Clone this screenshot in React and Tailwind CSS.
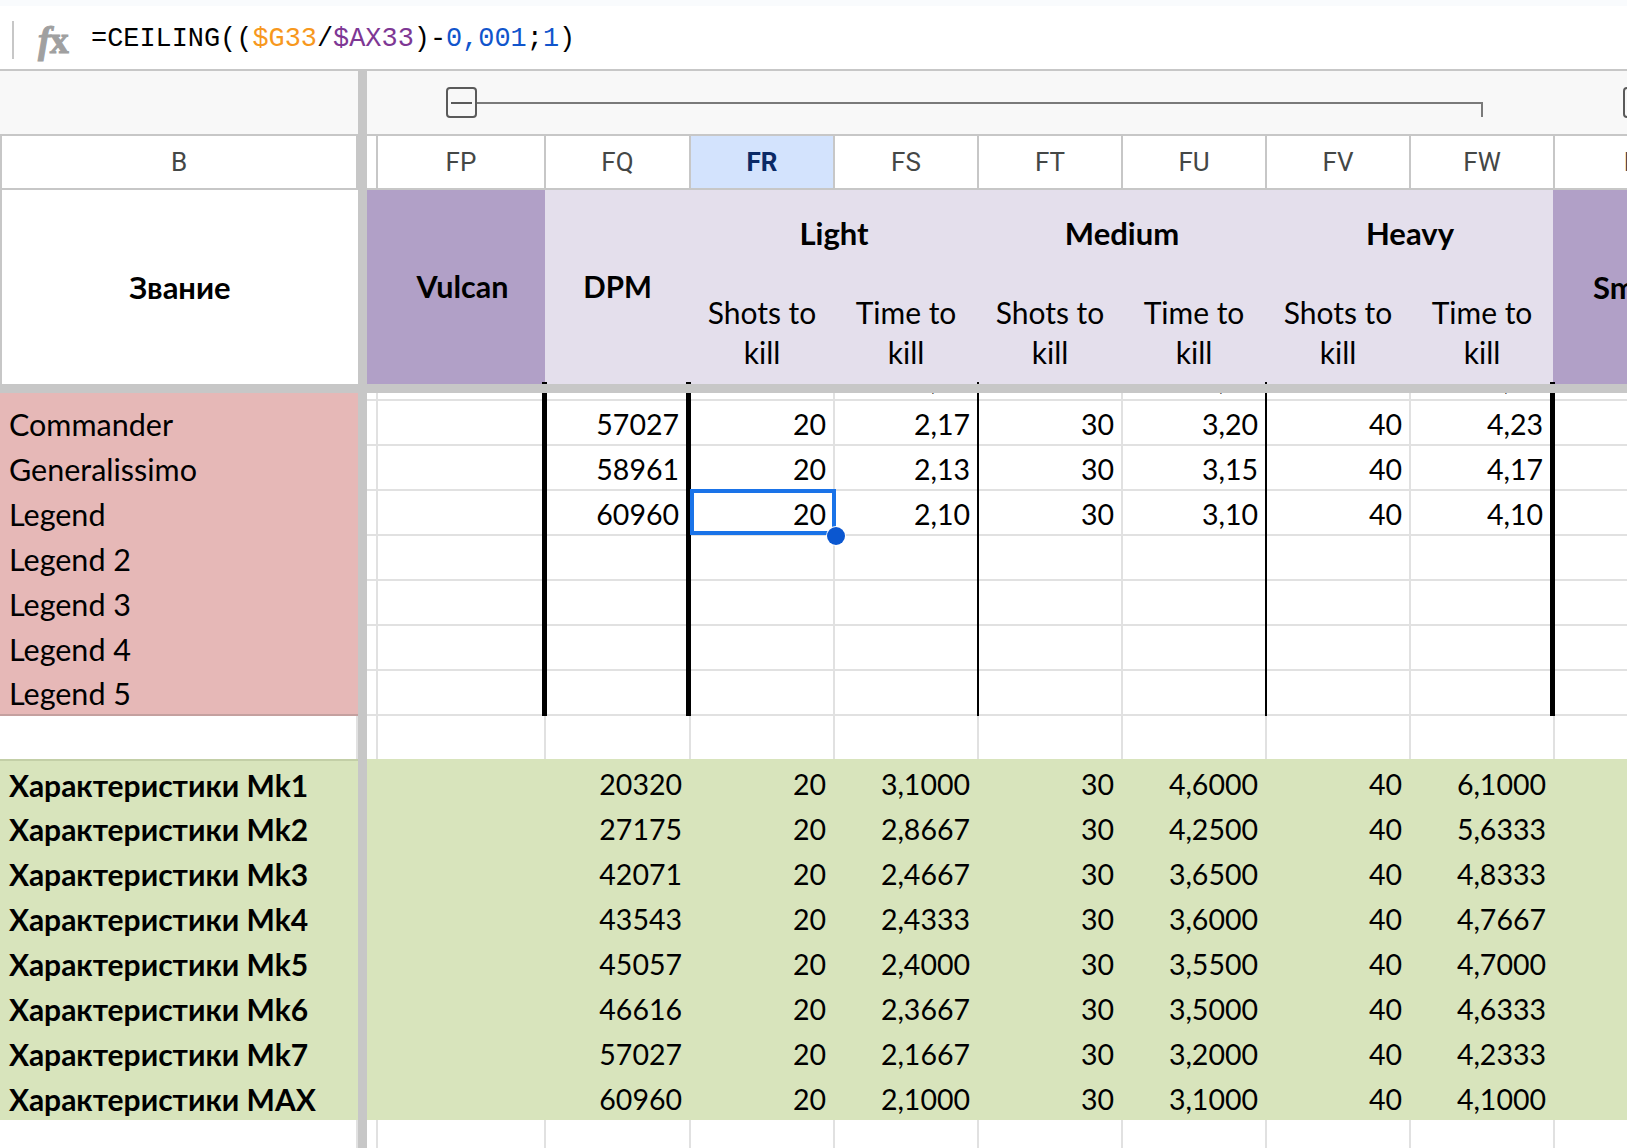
import React from 'react'

const sheetFont = "[font-family:Lato,'Noto_Sans',sans-serif]"

const columns = [
  { id: 'FQ', width: 'w-[145px]', line: 'thick' },
  { id: 'FR', width: 'w-[144px]' },
  { id: 'FS', width: 'w-[144px]', line: 'thin' },
  { id: 'FT', width: 'w-[144px]' },
  { id: 'FU', width: 'w-[144px]', line: 'thin' },
  { id: 'FV', width: 'w-[144px]' },
  { id: 'FW', width: 'w-[144px]', line: 'thick' },
]

const rankRows = [
  ['Commander', '57027', '20', '2,17', '30', '3,20', '40', '4,23'],
  ['Generalissimo', '58961', '20', '2,13', '30', '3,15', '40', '4,17'],
  ['Legend', '60960', '20', '2,10', '30', '3,10', '40', '4,10'],
  ['Legend 2'],
  ['Legend 3'],
  ['Legend 4'],
  ['Legend 5'],
]

const statRows = [
  ['Характеристики Mk1', '20320', '20', '3,1000', '30', '4,6000', '40', '6,1000'],
  ['Характеристики Mk2', '27175', '20', '2,8667', '30', '4,2500', '40', '5,6333'],
  ['Характеристики Mk3', '42071', '20', '2,4667', '30', '3,6500', '40', '4,8333'],
  ['Характеристики Mk4', '43543', '20', '2,4333', '30', '3,6000', '40', '4,7667'],
  ['Характеристики Mk5', '45057', '20', '2,4000', '30', '3,5500', '40', '4,7000'],
  ['Характеристики Mk6', '46616', '20', '2,3667', '30', '3,5000', '40', '4,6333'],
  ['Характеристики Mk7', '57027', '20', '2,1667', '30', '3,2000', '40', '4,2333'],
  ['Характеристики MAX', '60960', '20', '2,1000', '30', '3,1000', '40', '4,1000'],
]

const FreezeBar = () => <div className="w-[9px] shrink-0 self-stretch bg-[#c7c7c7]" />

const BlackLine = ({ kind }) =>
  kind === 'thick' ? (
    <span className="absolute -right-[2px] -top-[1px] -bottom-[2px] z-10 w-[5px] bg-black" />
  ) : (
    <span className="absolute -right-[2px] -top-[1px] -bottom-[2px] z-10 w-[2px] bg-black" />
  )

const HeaderTick = ({ kind }) =>
  kind === 'thick' ? (
    <span className="absolute -right-[1px] bottom-0 z-10 h-[2px] w-[5px] bg-black" />
  ) : (
    <span className="absolute -right-[1px] bottom-0 z-10 h-[2px] w-[2px] bg-black" />
  )

const RankRow = ({ row, last, selected }) => (
  <div className={`flex h-[45px] ${sheetFont} text-[28.5px] text-black`}>
    <div
      className={`flex w-[358px] shrink-0 items-center bg-[#e6b8b7] pl-[9px] pt-[3px] text-[30.5px] ${
        last ? 'border-b-2 border-[#c4a09f]' : ''
      }`}
    >
      {row[0]}
    </div>
    <FreezeBar />
    <div className="h-full w-[11px] shrink-0 border-r-2 border-b-2 border-[#e1e1e1]" />
    <div className="relative h-full w-[168px] shrink-0 border-b-2 border-r-2 border-[#e1e1e1]">
      <span className="absolute -right-[3px] -top-[1px] -bottom-[2px] z-10 w-[5px] bg-black" />
    </div>
    {columns.map((col, i) => (
      <div
        key={col.id}
        className={`relative flex h-full ${col.width} shrink-0 items-center justify-end border-b-2 border-r-2 border-[#e1e1e1] pt-[3px] ${
          col.line === 'thick' ? 'pr-[10px]' : 'pr-[7px]'
        }`}
      >
        {row[i + 1]}
        {col.line && <BlackLine kind={col.line} />}
        {selected && col.id === 'FR' && (
          <span className="absolute -left-[1px] -right-[3px] -top-[2px] -bottom-[1px] z-20 border-[4px] border-[#1a73e8]">
            <span className="absolute -right-[13px] -bottom-[14px] h-[18px] w-[18px] rounded-full bg-[#0b57d0] ring-1 ring-white" />
          </span>
        )}
      </div>
    ))}
    <div className="h-full flex-1 border-b-2 border-[#e1e1e1]" />
  </div>
)

const StatRow = ({ row, first, tall }) => (
  <div className={`flex ${tall ? 'h-[46px]' : 'h-[45px]'} ${sheetFont} text-[28.5px] text-black`}>
    <div
      className={`flex w-[358px] shrink-0 items-center bg-[#d8e4bc] pl-[9px] pt-[5px] text-[30px] font-bold ${
        first ? 'border-t-2 border-[#c3cfa7]' : ''
      }`}
    >
      {row[0]}
    </div>
    <FreezeBar />
    <div className="flex h-full flex-1 bg-[#d8e4bc]">
      <div className="w-[178px] shrink-0" />
      {columns.map((col, i) => (
        <div key={col.id} className={`flex ${col.width} shrink-0 items-center justify-end pr-[8px] pt-[5px]`}>
          {row[i + 1]}
        </div>
      ))}
    </div>
  </div>
)

const EmptyRow = ({ height }) => (
  <div className={`flex ${height}`}>
    <div className="w-[358px] shrink-0 border-r-2 border-[#e1e1e1]" />
    <FreezeBar />
    <div className="w-[11px] shrink-0 border-r-2 border-[#e1e1e1]" />
    <div className="w-[168px] shrink-0 border-r-2 border-[#e1e1e1]" />
    {columns.map((col) => (
      <div key={col.id} className={`${col.width} shrink-0 border-r-2 border-[#e1e1e1]`} />
    ))}
  </div>
)

const SubHeader = ({ children, line }) => (
  <div className="relative flex h-full w-[144px] shrink-0 items-center justify-center pt-[3px] text-center text-[30px] leading-[40px]">
    <span>{children}</span>
    {line && <HeaderTick kind={line} />}
  </div>
)

const WeightGroup = ({ title, line }) => (
  <div className="flex w-[288px] shrink-0 flex-col">
    <div className="flex h-[86px] items-center justify-center text-[31px] font-bold">{title}</div>
    <div className="flex flex-1">
      <SubHeader>
        Shots to
        <br />
        kill
      </SubHeader>
      <SubHeader line={line}>
        Time to
        <br />
        kill
      </SubHeader>
    </div>
  </div>
)

export default function App() {
  return (
    <div className="h-[1148px] w-[1627px] overflow-hidden bg-white">
      <div className="h-[6px] bg-[#f9fbfd]" />

      <div className="flex h-[63px] items-center bg-white pt-[4px]">
        <div className="ml-[12px] h-[38px] w-[2px] bg-[#c7c7c7]" />
        <span className="ml-[24px] flex w-[36px] font-['Liberation_Serif',serif] text-[38px] font-bold leading-none text-[#a0a0a0] [-webkit-text-stroke:1px_#a0a0a0]">
          <span className="italic">f</span>
          <span className="-ml-[1px]">x</span>
        </span>
        <div className="ml-[17px] whitespace-pre font-['Liberation_Mono',monospace] text-[26.9px] text-black">
          =CEILING((<span className="text-[#f7981d]">$G33</span>/<span className="text-[#7e3794]">$AX33</span>)-
          <span className="text-[#1155cc]">0,001</span>;<span className="text-[#1155cc]">1</span>)
        </div>
      </div>

      <div className="flex h-[67px] border-y-2 border-[#c7c7c7] bg-[#f8f8f8]">
        <div className="w-[358px] shrink-0" />
        <FreezeBar />
        <div className="flex flex-1 items-center pl-[79px]">
          <div className="flex h-[31px] w-[31px] shrink-0 items-center justify-center rounded-[4px] border-2 border-[#5a5a5a]">
            <span className="h-[2px] w-[21px] bg-[#5a5a5a]" />
          </div>
          <div className="mt-[13px] h-[15px] w-[1006px] shrink-0 border-r-2 border-t-2 border-[#7a7a7a]" />
          <div className="ml-[140px] h-[31px] w-[31px] shrink-0 rounded-[4px] border-2 border-[#5a5a5a]" />
        </div>
      </div>

      <div className="flex h-[54px] border-b-2 border-[#c7c7c7] font-['Roboto',sans-serif] text-[26px] text-[#444746]">
        <div className="flex w-[358px] shrink-0 items-center justify-center border-x-2 border-[#c7c7c7]">B</div>
        <FreezeBar />
        <div className="w-[11px] shrink-0 border-r-2 border-[#c7c7c7]" />
        <div className="flex w-[168px] shrink-0 items-center justify-center border-r-2 border-[#c7c7c7]">FP</div>
        {columns.map((col) => (
          <div
            key={col.id}
            className={`flex ${col.width} shrink-0 items-center justify-center border-r-2 border-[#c7c7c7] ${
              col.id === 'FR' ? 'bg-[#d3e3fd] font-bold text-[#0b2a66]' : ''
            }`}
          >
            {col.id}
          </div>
        ))}
        <div className="flex w-[168px] shrink-0 items-center justify-center">FX</div>
      </div>

      <div className={`flex h-[194px] ${sheetFont} text-black`}>
        <div className="flex w-[358px] shrink-0 items-center justify-center border-l-2 border-[#c7c7c7] text-[31px] font-bold">
          Звание
        </div>
        <FreezeBar />
        <div className="relative flex w-[178px] shrink-0 items-center justify-center bg-[#b1a0c7] pl-[13px] text-[30.5px] font-bold">
          Vulcan
          <span className="absolute -right-[2px] bottom-0 z-10 h-[2px] w-[5px] bg-black" />
        </div>
        <div className="relative flex w-[145px] shrink-0 items-center justify-center bg-[#e4dfec] text-[29.5px] font-bold">
          DPM
          <HeaderTick kind="thick" />
        </div>
        <div className="flex flex-1 bg-[#e4dfec]">
          <WeightGroup title="Light" line="thin" />
          <WeightGroup title="Medium" line="thin" />
          <WeightGroup title="Heavy" line="thick" />
          <div className="-ml-[1px] flex h-full w-[168px] shrink-0 items-center overflow-hidden whitespace-nowrap bg-[#b1a0c7] pl-[40px] text-[31px] font-bold">
            Smasher
          </div>
        </div>
      </div>

      <div className="h-[9px] bg-[#c7c7c7]" />

      {/* row scrolled under the freeze line, only its commas peek out */}
      <div className="h-[8px] overflow-hidden">
        <div className="-mt-[37px]">
          <RankRow row={['', '55298', '20', '2,20', '30', '3,25', '40', '4,30']} />
        </div>
      </div>

      {rankRows.map((row, i) => (
        <RankRow key={row[0]} row={row} last={i === rankRows.length - 1} selected={i === 2} />
      ))}

      <EmptyRow height="h-[43px]" />

      {statRows.map((row, i) => (
        <StatRow key={row[0]} row={row} first={i === 0} tall={i === statRows.length - 1} />
      ))}

      <EmptyRow height="h-[40px]" />
    </div>
  )
}
